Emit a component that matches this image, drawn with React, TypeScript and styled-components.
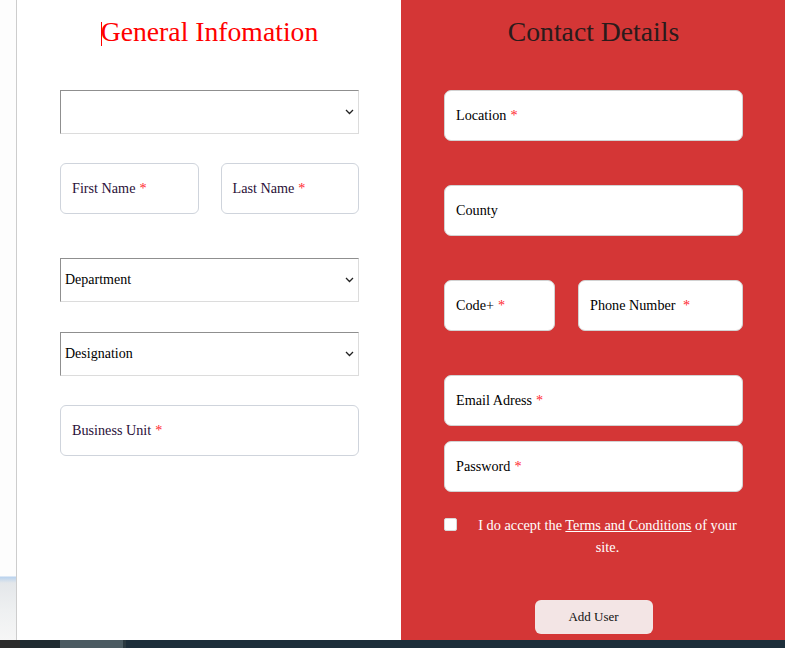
import React from "react";
import styled, { createGlobalStyle } from "styled-components";

const Global = createGlobalStyle`
  html, body { margin: 0; padding: 0; overflow: hidden; background: #fff; }
  body { font-family: "Liberation Serif", "Times New Roman", serif; }
  * { box-sizing: border-box; }
`;

const Screen = styled.div`
  width: 785px;
  height: 648px;
  display: flex;
  flex-direction: column;
`;

const Main = styled.div`
  display: flex;
  height: 640px;
`;

const Gutter = styled.div`
  width: 17px;
  border-right: 1px solid #cdcdcd;
  background: linear-gradient(
    to bottom,
    #fdfdfd 0px,
    #fdfdfd 576px,
    #b9d2ee 577px,
    #e4e7ea 583px,
    #eef0f1 610px,
    #f6f6f6 640px
  );
`;

const Panel = styled.section<{ $red?: boolean }>`
  width: 384px;
  background: ${(p) => (p.$red ? "#d43636" : "#ffffff")};
  padding: 16px 42px 0 43px;
  display: flex;
  flex-direction: column;
`;

const Heading = styled.h2<{ $color: string }>`
  margin: 0;
  height: 32px;
  line-height: 32px;
  font-family: "Liberation Serif", "Times New Roman", serif;
  font-weight: normal;
  font-size: 27.7px;
  text-align: center;
  color: ${(p) => p.$color};
`;

const Caret = styled.span`
  display: inline-block;
  width: 1px;
  height: 24px;
  background: #ff0000;
  vertical-align: -5px;
  margin-right: -1px;
`;

const Spacer = styled.div<{ $h: number }>`
  height: ${(p) => p.$h}px;
  flex: none;
`;

const SelectBox = styled.div`
  height: 44px;
  flex: none;
  display: flex;
  align-items: center;
  justify-content: space-between;
  padding: 0 4px;
  border-top: 1px solid #8f8f8f;
  border-left: 1px solid #8f8f8f;
  border-right: 1px solid #dcdcdc;
  border-bottom: 1px solid #dcdcdc;
  background: #fff;
  font-size: 14px;
  color: #000;
`;

const Chevron = () => (
  <svg width="9" height="6" viewBox="0 0 9 6" fill="none">
    <path d="M1 1 L4.5 4.5 L8 1" stroke="#222" strokeWidth="1.3" />
  </svg>
);

const Row = styled.div<{ $gap: number }>`
  display: flex;
  flex: none;
  gap: ${(p) => p.$gap}px;
`;

const Field = styled.div<{ $w?: number; $grow?: boolean; $dark?: boolean; $radius?: number }>`
  flex: ${(p) => (p.$grow ? "1 1 0" : "none")};
  ${(p) => (p.$w ? `width: ${p.$w}px;` : "")}
  height: 51px;
  display: flex;
  align-items: center;
  padding-left: 11px;
  background: #fff;
  border: 1px solid ${(p) => (p.$dark ? "#d2d2d2" : "#cfd4dc")};
  border-radius: ${(p) => p.$radius ?? 6}px;
  font-size: 14.2px;
  color: ${(p) => (p.$dark ? "#000" : "#2a1038")};
  white-space: pre;
`;

const Star = styled.span`
  color: #ff1f2f;
  margin-left: 4px;
`;

const Accept = styled.div`
  display: flex;
  flex: none;
  align-items: flex-start;
  color: #fff;
  font-size: 14.3px;
  line-height: 22px;
`;

const Check = styled.span`
  width: 13px;
  height: 13px;
  margin-top: 4px;
  flex: none;
  background: #fff;
  border: 1px solid #d8d8d8;
  border-radius: 2px;
`;

const AcceptText = styled.p`
  flex: 1;
  margin: 0;
  padding-left: 15px;
  text-align: center;
`;

const TermsLink = styled.a`
  color: #fff;
  text-decoration: underline;
`;

const ButtonRow = styled.div`
  display: flex;
  flex: none;
  justify-content: center;
`;

const AddButton = styled.button`
  width: 118px;
  height: 34px;
  border: none;
  border-radius: 6px;
  background: #f3e5e5;
  color: #111;
  font-family: "Liberation Serif", "Times New Roman", serif;
  font-size: 13px;
  padding: 0;
`;

const Taskbar = styled.div`
  height: 8px;
  display: flex;
  background: #1d2e3a;
`;

const TaskSeg = styled.div<{ $w: number; $bg: string }>`
  width: ${(p) => p.$w}px;
  background: ${(p) => p.$bg};
  flex: none;
`;

const Label = ({ text, req = true }: { text: string; req?: boolean }) => (
  <>
    {text}
    {req && <Star>*</Star>}
  </>
);

export default function App() {
  return (
    <>
      <Global />
      <Screen>
        <Main>
          <Gutter />
          <Panel>
            <Heading $color="#ff0000">
              <Caret />
              General Infomation
            </Heading>
            <Spacer $h={42} />
            <SelectBox>
              <span />
              <Chevron />
            </SelectBox>
            <Spacer $h={29} />
            <Row $gap={22}>
              <Field $grow>
                <Label text="First Name" />
              </Field>
              <Field $grow>
                <Label text="Last Name" />
              </Field>
            </Row>
            <Spacer $h={44} />
            <SelectBox>
              <span>Department</span>
              <Chevron />
            </SelectBox>
            <Spacer $h={30} />
            <SelectBox>
              <span>Designation</span>
              <Chevron />
            </SelectBox>
            <Spacer $h={29} />
            <Field>
              <Label text="Business Unit" />
            </Field>
          </Panel>
          <Panel $red>
            <Heading $color="#2a1b1b">Contact Details</Heading>
            <Spacer $h={42} />
            <Field $dark $radius={7}>
              <Label text="Location" />
            </Field>
            <Spacer $h={44} />
            <Field $dark $radius={7}>
              <Label text="County" req={false} />
            </Field>
            <Spacer $h={44} />
            <Row $gap={23}>
              <Field $dark $w={111} $radius={7}>
                <Label text="Code+" />
              </Field>
              <Field $dark $grow $radius={7}>
                <Label text="Phone Number " />
              </Field>
            </Row>
            <Spacer $h={44} />
            <Field $dark $radius={7}>
              <Label text="Email Adress" />
            </Field>
            <Spacer $h={15} />
            <Field $dark $radius={7}>
              <Label text="Password" />
            </Field>
            <Spacer $h={22} />
            <Accept>
              <Check />
              <AcceptText>
                I do accept the <TermsLink href="#">Terms and Conditions</TermsLink> of your
                site.
              </AcceptText>
            </Accept>
            <Spacer $h={42} />
            <ButtonRow>
              <AddButton>Add User</AddButton>
            </ButtonRow>
          </Panel>
        </Main>
        <Taskbar>
          <TaskSeg $w={20} $bg="#2b2b2b" />
          <TaskSeg $w={40} $bg="#1f2a30" />
          <TaskSeg $w={63} $bg="#4b5b62" />
          <TaskSeg $w={3} $bg="#2a3940" />
        </Taskbar>
      </Screen>
    </>
  );
}
